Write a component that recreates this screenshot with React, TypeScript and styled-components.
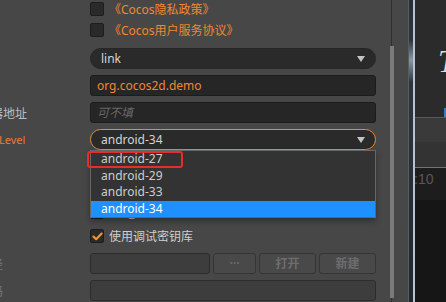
import React from "react";
import styled, { createGlobalStyle } from "styled-components";

const GlobalStyle = createGlobalStyle`
  html, body { margin: 0; padding: 0; background: #474747; overflow: hidden; }
  body { font-family: "Noto Sans", "Noto Sans CJK SC", sans-serif; font-size: 12px; }
  * { box-sizing: border-box; }
`;

const Screen = styled.div`
  display: flex;
  width: 446px;
  height: 302px;
  overflow: hidden;
  background: #474747;
`;

const Panel = styled.div`
  flex: 0 0 408px;
  display: flex;
  align-items: flex-start;
  overflow: hidden;
  background: #474747;
`;

const Form = styled.div`
  flex: 0 0 433px;
  margin-left: -57px;
  margin-top: -1px;
  display: flex;
  flex-direction: column;
`;

const Row = styled.div<{ $h: number; $mt: number }>`
  display: grid;
  grid-template-columns: 147px 286px;
  align-items: center;
  height: ${(p) => p.$h}px;
  margin-top: ${(p) => p.$mt}px;
`;

const Label = styled.span<{ $tone?: "normal" | "accent" | "dim"; $small?: boolean }>`
  font-size: ${(p) => (p.$small ? 11 : 12)}px;
  white-space: nowrap;
  color: ${(p) => (p.$tone === "accent" ? "#ec7a36" : p.$tone === "dim" ? "#767676" : "#bdbdbd")};
`;

const CheckLine = styled.div`
  display: flex;
  align-items: center;
  gap: 5px;
`;

const Check = styled.span`
  flex: 0 0 14px;
  width: 14px;
  height: 14px;
  border-radius: 2px;
  background: #2a2a2a;
  border: 1px solid #1d1d1d;
  display: inline-flex;
  align-items: center;
  justify-content: center;
`;

const CheckText = styled.span<{ $link?: boolean }>`
  font-size: 12px;
  line-height: 16px;
  padding-top: 2px;
  white-space: nowrap;
  color: ${(p) => (p.$link ? "#f0882c" : "#cecece")};
`;

const Field = styled.div`
  position: relative;
  height: 21px;
`;

const SelectBox = styled.div<{ $focused?: boolean }>`
  height: 21px;
  border-radius: 11px;
  background: #2a2a2a;
  border: 1px solid ${(p) => (p.$focused ? "#e88a2e" : "#262626")};
  display: flex;
  align-items: center;
  justify-content: space-between;
  padding: 0 10px;
  color: #d4d4d4;
  font-size: 12px;
`;

const TextInput = styled.input<{ $accent?: boolean }>`
  width: 100%;
  height: 21px;
  border-radius: 3px;
  background: #262626;
  border: 1px solid #1c1c1c;
  padding: 0 6px;
  font-family: inherit;
  font-size: 12px;
  color: ${(p) => (p.$accent ? "#f0882c" : "#d4d4d4")};
  outline: none;
  &::placeholder {
    color: #686868;
    font-style: italic;
  }
  &:disabled {
    background: #3d3d3d;
    border-color: #2c2c2c;
  }
`;

const InlineGroup = styled.div`
  display: flex;
  gap: 3px;
  height: 21px;
`;

const PathInput = styled(TextInput)`
  flex: 0 0 120px;
  width: 120px;
`;

const Btn = styled.button<{ $w: number }>`
  flex: 0 0 ${(p) => p.$w}px;
  height: 21px;
  border-radius: 3px;
  border: 1px solid #353535;
  background: #494949;
  color: #6d6d6d;
  font-family: inherit;
  font-size: 12px;
  font-weight: 600;
  padding: 0;
  line-height: 19px;
`;

const Menu = styled.ul`
  position: absolute;
  top: 21px;
  left: 0;
  right: 0;
  margin: 0;
  padding: 0;
  list-style: none;
  background: #333333;
  border: 1px solid #666666;
  box-shadow: 0 3px 6px rgba(0, 0, 0, 0.35);
  z-index: 10;
`;

const MenuItem = styled.li<{ $active?: boolean }>`
  height: 16.5px;
  line-height: 16.5px;
  padding-left: 10px;
  font-size: 12px;
  color: ${(p) => (p.$active ? "#ffffff" : "#cdcdcd")};
  background: ${(p) => (p.$active ? "#1e90ff" : "transparent")};
`;

const Marker = styled.span`
  position: absolute;
  left: -4px;
  top: 0;
  width: 96px;
  height: 17px;
  border: 2px solid #e52d2b;
  border-radius: 3px;
  pointer-events: none;
`;

const Scrollbar = styled.div`
  flex: 0 0 4px;
  margin-left: 14px;
  height: 302px;
  display: flex;
  flex-direction: column;
  background: linear-gradient(to right, transparent 1px, #2f2f2f 1px, #2f2f2f 2px, transparent 2px);
`;

const Thumb = styled.div`
  margin-top: 46px;
  height: 252px;
  background: #7b7b7b;
`;

const WindowEdge = styled.div`
  flex: 0 0 7px;
  border-left: 1px solid #5c5c5c;
  background: linear-gradient(to right, transparent 4px, #bac2cb 4px),
    linear-gradient(to bottom, #27303a 0, #2b3540 40px, #8898a9 60px, #2c3641 82px, #1f2731 100%);
`;

const RightPane = styled.div`
  flex: 1;
  display: flex;
  flex-direction: column;
  overflow: hidden;
  background: #161616;
`;

const Viewport = styled.div`
  height: 117px;
  background: #2b2b2b;
  display: flex;
  flex-direction: column;
  padding-top: 46px;
`;

const Glyph = styled.span`
  font-family: "Liberation Serif", serif;
  font-style: italic;
  font-size: 31px;
  line-height: 1;
  color: #dedede;
  margin-left: 23px;
  white-space: nowrap;
`;

const BlueTab = styled.span`
  align-self: flex-end;
  margin-top: auto;
  width: 2px;
  height: 9px;
  background: #3c7cc0;
`;

const Toolbar = styled.div`
  height: 50px;
  border-top: 1px solid #5a5a5a;
  background: linear-gradient(to bottom, #3a3a3a 0, #3a3a3a 24px, #333333 24px);
`;

const Ruler = styled.div`
  height: 33px;
  border-top: 1px solid #747474;
  background: #1d1d1d;
  padding-top: 3px;
  overflow: hidden;
`;

const RulerText = styled.span`
  display: block;
  margin-left: -1px;
  font-family: "Liberation Sans", sans-serif;
  font-size: 14px;
  color: #585858;
  white-space: nowrap;
`;

const CheckMark = () => (
  <svg width="11" height="9" viewBox="0 0 11 9">
    <path d="M1.5 4.6 L4.2 7.2 L9.6 1.6" fill="none" stroke="#f5912f" strokeWidth="2.2" strokeLinecap="round" strokeLinejoin="round" />
  </svg>
);

const Arrow = () => (
  <svg width="8" height="6" viewBox="0 0 8 6">
    <polygon points="0,0 8,0 4,6" fill="#c4c4c4" />
  </svg>
);

const options = ["android-27", "android-29", "android-33", "android-34"];

export default function App() {
  return (
    <>
      <GlobalStyle />
      <Screen>
        <Panel>
          <Form>
            <Row $h={20} $mt={0}>
              <Label />
              <CheckLine>
                <Check />
                <CheckText $link>《Cocos隐私政策》</CheckText>
              </CheckLine>
            </Row>
            <Row $h={20} $mt={1}>
              <Label />
              <CheckLine>
                <Check />
                <CheckText $link>《Cocos用户服务协议》</CheckText>
              </CheckLine>
            </Row>
            <Row $h={21} $mt={8}>
              <Label>连接方式</Label>
              <SelectBox>
                <span>link</span>
                <Arrow />
              </SelectBox>
            </Row>
            <Row $h={21} $mt={6}>
              <Label>包名</Label>
              <TextInput $accent readOnly value="org.cocos2d.demo" />
            </Row>
            <Row $h={21} $mt={6}>
              <Label>远程服务器地址</Label>
              <TextInput readOnly placeholder="可不填" />
            </Row>
            <Row $h={21} $mt={6}>
              <Label $tone="accent" $small>Target API Level</Label>
              <Field>
                <SelectBox $focused>
                  <span>android-34</span>
                  <Arrow />
                </SelectBox>
                <Menu>
                  {options.map((o) => (
                    <MenuItem key={o} $active={o === "android-34"}>
                      {o}
                    </MenuItem>
                  ))}
                  <Marker />
                </Menu>
              </Field>
            </Row>
            <Row $h={20} $mt={10}>
              <Label>APP ABI</Label>
              <CheckLine>
                <Check />
                <CheckText>armeabi-v7a</CheckText>
              </CheckLine>
            </Row>
            <Row $h={20} $mt={1}>
              <Label />
              <CheckLine>
                <Check />
                <CheckText>arm64-v8a</CheckText>
              </CheckLine>
            </Row>
            <Row $h={20} $mt={1}>
              <Label />
              <CheckLine>
                <Check />
                <CheckText>x86_64</CheckText>
              </CheckLine>
            </Row>
            <Row $h={20} $mt={4}>
              <Label />
              <CheckLine>
                <Check>
                  <CheckMark />
                </Check>
                <CheckText>使用调试密钥库</CheckText>
              </CheckLine>
            </Row>
            <Row $h={21} $mt={7}>
              <Label $tone="dim">密钥库路径</Label>
              <InlineGroup>
                <PathInput disabled readOnly value="" />
                <Btn $w={43} disabled>···</Btn>
                <Btn $w={57} disabled>打开</Btn>
                <Btn $w={57} disabled>新建</Btn>
              </InlineGroup>
            </Row>
            <Row $h={21} $mt={6}>
              <Label $tone="dim">密钥库密码</Label>
              <TextInput disabled readOnly value="" />
            </Row>
          </Form>
          <Scrollbar>
            <Thumb />
          </Scrollbar>
        </Panel>
        <WindowEdge />
        <RightPane>
          <Viewport>
            <Glyph>T</Glyph>
            <BlueTab />
          </Viewport>
          <Toolbar />
          <Ruler>
            <RulerText>:10</RulerText>
          </Ruler>
        </RightPane>
      </Screen>
    </>
  );
}
